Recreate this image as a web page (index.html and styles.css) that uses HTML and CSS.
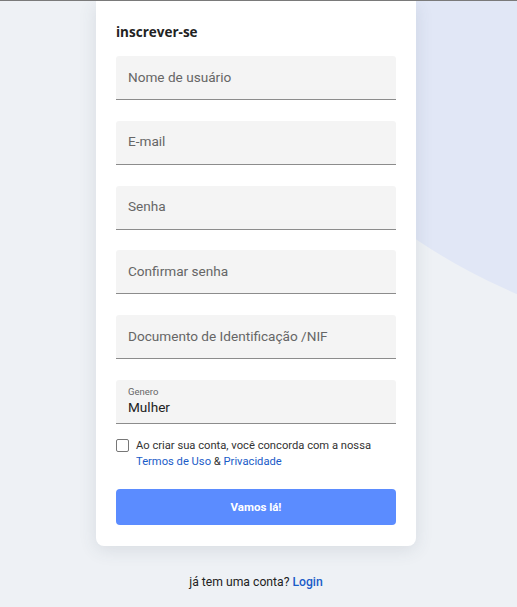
FILE: index.html
```html
<!DOCTYPE html>
<html lang="pt">
<head>
<meta charset="utf-8">
<link rel="stylesheet" href="styles.css">
</head>
<body>
<div class="bg"><div class="blob"></div></div>
<main class="page">
  <form class="card">
    <h1 class="title">inscrever-se</h1>
    <div class="field"><span class="ph">Nome de usuário</span></div>
    <div class="field"><span class="ph">E-mail</span></div>
    <div class="field"><span class="ph">Senha</span></div>
    <div class="field"><span class="ph">Confirmar senha</span></div>
    <div class="field"><span class="ph">Documento de Identificação /NIF</span></div>
    <div class="field field-select">
      <span class="label">Genero</span>
      <span class="value">Mulher</span>
    </div>
    <div class="terms">
      <span class="box"></span>
      <p>Ao criar sua conta, você concorda com a nossa<br><a class="link">Termos de Uso</a> &amp; <a class="link">Privacidade</a></p>
    </div>
    <button type="button" class="btn">Vamos lá!</button>
  </form>
  <p class="footer">já tem uma conta? <a class="login">Login</a></p>
</main>
</body>
</html>
```
FILE: styles.css
```css
html, body {
  margin: 0;
  padding: 0;
}
body {
  background: #eef1f5;
  border-top: 1px solid #7a7a7a;
  height: 606px;
  position: relative;
  overflow: hidden;
  font-family: Roboto, "Liberation Sans", sans-serif;
}
.bg {
  position: absolute;
  inset: 0;
  overflow: hidden;
}
.blob {
  position: absolute;
  left: 151px;
  top: -861px;
  width: 1202px;
  height: 1202px;
  border-radius: 50%;
  background: #e1e7f6;
}
.page {
  position: relative;
  padding-left: 96px;
  width: 320px;
}
.card {
  background: #fff;
  width: 280px;
  padding: 20px 20px 21px;
  border-radius: 0 0 8px 8px;
  box-shadow: 0 4px 18px rgba(60, 70, 90, 0.12);
}
.title {
  margin: 2px 0 15px;
  font-family: "Open Sans", "Noto Sans", sans-serif;
  font-weight: 700;
  font-size: 13.5px;
  line-height: 18px;
  color: #222;
}
.field {
  height: 43px;
  background: #f4f4f4;
  border-bottom: 1px solid #8c8c8c;
  border-radius: 3px 3px 0 0;
  margin-bottom: 20.8px;
  display: flex;
  align-items: center;
  padding: 0 12px;
}
.ph {
  font-size: 13.6px;
  color: #666;
  position: relative;
  top: -1px;
}
.field-select {
  flex-direction: column;
  align-items: flex-start;
  justify-content: center;
  margin-bottom: 14px;
}
.label {
  font-size: 9.5px;
  color: #666;
  line-height: 12px;
}
.value {
  font-size: 13.6px;
  color: #222;
  line-height: 18px;
}
.terms {
  display: flex;
  align-items: flex-start;
  gap: 7px;
}
.box {
  width: 11px;
  height: 11px;
  border: 1px solid #777;
  border-radius: 2px;
  margin-top: 1px;
  flex: none;
}
.terms p {
  margin: 0;
  font-size: 11.2px;
  line-height: 16px;
  color: #333;
}
.link {
  color: #1a5cc8;
}
.btn {
  display: block;
  width: 280px;
  height: 36px;
  margin-top: 19px;
  border: 0;
  border-radius: 4px;
  background: #5b8cff;
  color: #fff;
  font-family: Roboto, "Liberation Sans", sans-serif;
  font-weight: 700;
  font-size: 11.5px;
}
.footer {
  margin: 29px 0 0;
  text-align: center;
  font-size: 12.2px;
  color: #222;
}
.login {
  color: #1a5cc8;
  font-weight: 500;
}
```
